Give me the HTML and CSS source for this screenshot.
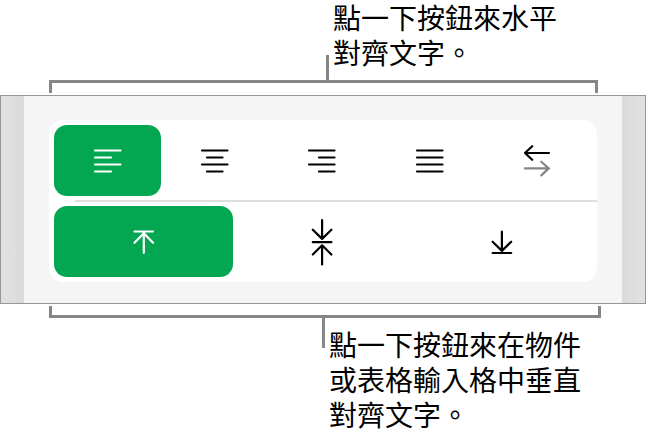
FILE: index.html
```html
<!DOCTYPE html>
<html lang="zh-Hant">
<head>
<meta charset="utf-8">
<title>對齊文字</title>
<link rel="stylesheet" href="styles.css">
</head>
<body>
<section class="note note-top">
  <div class="callout"><span class="stem"></span><p>點一下按鈕來水平<br>對齊文字。</p></div>
  <div class="bracket"></div>
</section>
<main class="panel">
  <div class="edge edge-left"></div>
  <div class="content">
    <div class="card">
      <div class="row horizontal">
        <button class="selected" aria-label="靠左"><svg width="30" height="30" viewBox="0 0 30 30"><path d="M2 4.5h25.5M2 11.5h16M2 18.5h25.5M2 25.5h16"/></svg></button>
        <button aria-label="置中"><svg width="30" height="30" viewBox="0 0 30 30"><path d="M2 4.5h25.5M7 11.5h15.5M2 18.5h25.5M7 25.5h15.5"/></svg></button>
        <button aria-label="靠右"><svg width="30" height="30" viewBox="0 0 30 30"><path d="M2 4.5h25.5M12 11.5h15.5M2 18.5h25.5M12 25.5h15.5"/></svg></button>
        <button aria-label="左右對齊"><svg width="30" height="30" viewBox="0 0 30 30"><path d="M2 4.5h25.5M2 11.5h25.5M2 18.5h25.5M2 25.5h25.5"/></svg></button>
        <button aria-label="方向"><svg width="30" height="36" viewBox="0 0 30 36"><path d="M27 10H3M10.2 3.2L3 10l7.2 6.8"/><path class="muted" d="M3 25.4h24M19.3 18.7l7.4 6.7-7.4 7"/></svg></button>
      </div>
      <div class="divider"></div>
      <div class="row vertical">
        <button class="selected" aria-label="靠上"><svg width="30" height="30" viewBox="0 0 30 30"><path d="M5.5 4.5h18.5M14.8 25.8V5.5M5.5 15.8l9.3-9.5 9.3 9.5"/></svg></button>
        <button aria-label="垂直置中"><svg width="30" height="50" viewBox="0 0 30 50"><path d="M4.8 25.2h18.6M14.1 3v18.5M4.8 12.7l9.3 9.2 9.3-9.2M14.1 47.5V28.5M4.8 37.5l9.3-9.2 9.3 9.2"/></svg></button>
        <button aria-label="靠下"><svg width="30" height="30" viewBox="0 0 30 30"><path d="M5.6 26h18.6M14.9 4.7v19M5.6 14.7l9.3 9.2 9.3-9.2"/></svg></button>
      </div>
    </div>
  </div>
  <div class="edge edge-right"></div>
</main>
<section class="note note-bottom">
  <div class="bracket"></div>
  <div class="callout"><span class="stem"></span><p>點一下按鈕來在物件<br>或表格輸入格中垂直<br>對齊文字。</p></div>
</section>
</body>
</html>
```
FILE: styles.css
```css
* { box-sizing: border-box; }
body {
  margin: 0;
  width: 646px;
  height: 431px;
  overflow: hidden;
  display: flex;
  flex-direction: column;
  background: #fff;
  color: #000;
  font: 28px/35px "Noto Sans CJK TC", sans-serif;
}
p { margin: 0; white-space: nowrap; }
.note { display: flex; flex-direction: column; flex: none; }
.note-top { height: 95px; }
.callout { display: flex; }
.stem { width: 3px; background: #868686; flex: none; }
.note-top .callout { height: 80px; padding-left: 326px; gap: 4px; }
.note-top .stem { margin-top: 55px; }
.bracket { border: 3px solid #868686; }
.note-top .bracket {
  width: 549px;
  height: 13px;
  margin-left: 49px;
  border-bottom: 0;
}
.panel {
  flex: none;
  height: 209px;
  display: flex;
  border: 1px solid #979797;
}
.edge { width: 23px; }
.edge-left { background: linear-gradient(90deg, #e1e1e1, #d9dada); }
.edge-right { background: linear-gradient(90deg, #d9dada, #e1e1e1); }
.content { flex: 1; padding: 24px 25px 21px; background: #f4f5f4; }
.card {
  width: 548px;
  height: 162px;
  padding: 5px 0 5px 5px;
  border-radius: 14px;
  background: #fff;
}
.row { display: grid; height: 71px; }
.horizontal { grid-template-columns: repeat(5, 107px); column-gap: .4px; }
.vertical { grid-template-columns: repeat(3, 179px); }
.divider { height: 2px; margin: 4px 0 4px 21px; background: #dedede; }
button {
  display: flex;
  align-items: center;
  justify-content: center;
  padding: 0;
  border: 0;
  border-radius: 13px;
  background: transparent;
  color: #000;
}
.selected { background: #04a751; color: #fff; }
svg {
  display: block;
  fill: none;
  stroke: currentColor;
  stroke-width: 2.2;
  stroke-linecap: round;
  stroke-linejoin: round;
}
.muted { stroke: #858585; }
.note-bottom { padding-top: 2px; }
.note-bottom .bracket {
  width: 552px;
  height: 12px;
  margin-left: 49px;
  border-top: 0;
}
.note-bottom .callout { padding-left: 322px; gap: 4px; }
.note-bottom .stem { width: 3px; height: 30px; }
.note-bottom p { padding-top: 9px; }
```
